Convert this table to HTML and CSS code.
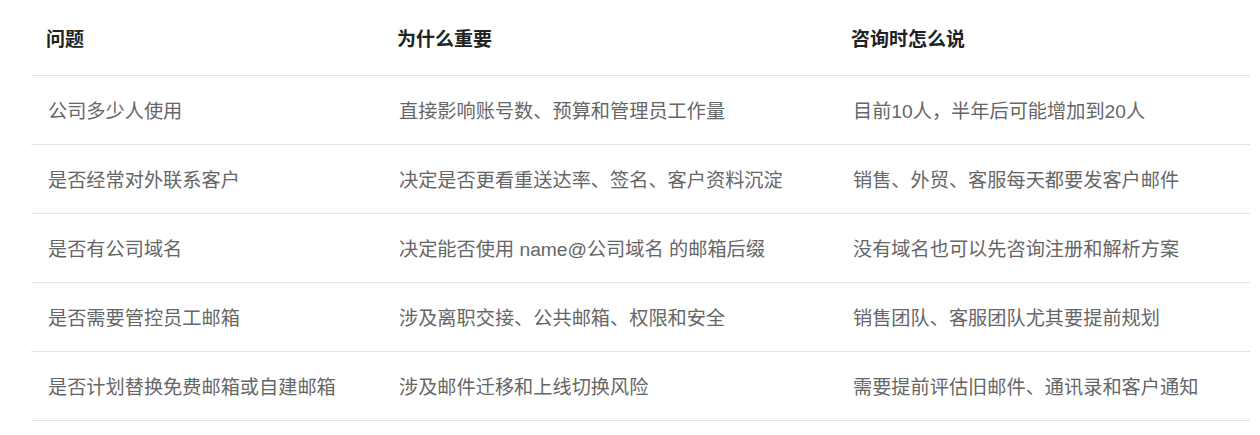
FILE: index.html
```html
<!DOCTYPE html>
<html lang="zh-CN">
<head>
<meta charset="utf-8">
<link rel="stylesheet" href="styles.css">
</head>
<body>
<div class="wrap">
<table class="qa">
  <colgroup>
    <col class="c1"><col class="c2"><col class="c3">
  </colgroup>
  <thead>
    <tr><th>问题</th><th>为什么重要</th><th>咨询时怎么说</th></tr>
  </thead>
  <tbody>
    <tr><td>公司多少人使用</td><td>直接影响账号数、预算和管理员工作量</td><td>目前10人，半年后可能增加到20人</td></tr>
    <tr><td>是否经常对外联系客户</td><td>决定是否更看重送达率、签名、客户资料沉淀</td><td>销售、外贸、客服每天都要发客户邮件</td></tr>
    <tr><td>是否有公司域名</td><td>决定能否使用 name@公司域名 的邮箱后缀</td><td>没有域名也可以先咨询注册和解析方案</td></tr>
    <tr><td>是否需要管控员工邮箱</td><td>涉及离职交接、公共邮箱、权限和安全</td><td>销售团队、客服团队尤其要提前规划</td></tr>
    <tr><td>是否计划替换免费邮箱或自建邮箱</td><td>涉及邮件迁移和上线切换风险</td><td>需要提前评估旧邮件、通讯录和客户通知</td></tr>
  </tbody>
</table>
</div>
</body>
</html>
```

FILE: styles.css
```css
html, body {
  margin: 0;
  padding: 0;
  background: #fff;
}
body {
  font-family: "Liberation Sans", "Noto Sans CJK SC", sans-serif;
  font-size: 19.2px;
}
.wrap {
  padding-left: 31px;
}
.qa {
  border-collapse: collapse;
  width: 1219px;
  table-layout: fixed;
}
.c1 { width: 351px; }
.c2 { width: 454px; }
.c3 { width: 414px; }
.qa th {
  text-align: left;
  font-weight: bold;
  color: #222;
  height: 75px;
  padding: 0 15px;
  box-sizing: border-box;
  vertical-align: middle;
  border-bottom: 1px solid #e3e3e3;
  font-size: 19px;
}
.qa td {
  color: #666;
  height: 69.2px;
  padding: 0 17px;
  box-sizing: border-box;
  vertical-align: middle;
  border-bottom: 1px solid #e3e3e3;
}
```
